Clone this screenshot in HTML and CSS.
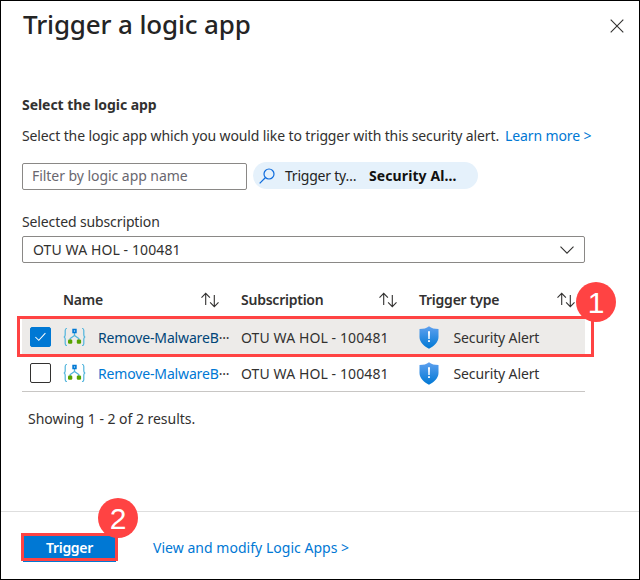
FILE: index.html
```html
<!DOCTYPE html>
<html lang="en">
<head>
<meta charset="utf-8">
<title>Trigger a logic app</title>
<link rel="stylesheet" href="styles.css">
</head>
<body>
<svg class="defs" width="0" height="0">
  <defs>
    <linearGradient id="shieldFill" x1="0" y1="0" x2="0" y2="1"><stop offset="0" stop-color="#5ea0ef"/><stop offset="1" stop-color="#0078d4"/></linearGradient>
    <symbol id="sort" viewBox="0 0 20 16"><path d="M5.7 13V1.5M1.5 5.6 5.7 1.4 9.9 5.6M14.3 3V14.5M10.1 10.4 14.3 14.6 18.5 10.4" fill="none" stroke="#323130" stroke-width="1.1"/></symbol>
    <symbol id="logic" viewBox="0 0 24 20">
      <path d="M4 1.500H3.600Q2.200 1.500 2.200 3.500V7.500Q2.200 10 .7 10 2.200 10 2.200 12.500V16.500Q2.200 18.500 3.600 18.500H4M19 1.500H19.400Q20.800 1.500 20.800 3.500V7.500Q20.800 10 22.300 10 20.800 10 20.800 12.500V16.500Q20.800 18.500 19.400 18.500H19" fill="none" stroke="#50b4dc" stroke-width="1.2"/>
      <path d="M11.500 6V8.500L7.200 11.500V13M11.500 8.500 15.800 11.500V13" fill="none" stroke="#50b4dc" stroke-width="1.3"/>
      <path d="M10.100 2.600H12.900V5.400H10.100Z" fill="#fff" stroke="#0078d4" stroke-width="1.600"/>
      <rect x="5" y="12.500" width="4.300" height="4.200" rx="1.200" fill="#57a300"/><rect x="13.800" y="12.500" width="4.300" height="4.200" rx="1.200" fill="#57a300"/>
    </symbol>
    <symbol id="shield" viewBox="0 0 20 23"><path d="M10 .3C12.500 2.500 15.500 2.900 19.500 3V11C19.500 16.500 14.500 20.500 10 22.700 5.500 20.500.5 16.500.5 11V3C4.500 2.900 7.500 2.500 10 .3Z" fill="url(#shieldFill)"/><path d="M9 5.200H11L10.700 13H9.300Z" fill="#fff"/><rect x="9.100" y="14.200" width="1.800" height="1.800" fill="#fff"/></symbol>
  </defs>
</svg>
<main class="panel">
  <header class="top"><h1 class="title">Trigger a logic app</h1>
    <svg class="close" viewBox="0 0 14 14"><path d="M.7.7 13.300 13.300M13.300.7.7 13.300" stroke="#323130" stroke-width="1.1"/></svg></header>
  <section class="body">
    <h2 class="section">Select the logic app</h2>
    <p class="desc"><span>Select the logic app which you would like to trigger with this security alert.</span><a class="learn">Learn more &gt;</a></p>
    <div class="filters">
      <div class="filter">Filter by logic app name</div>
      <div class="pill"><svg class="search" viewBox="0 0 16 16"><circle cx="10" cy="6" r="5" fill="none" stroke="#0f6cdd" stroke-width="1.200"/><path d="M6.500 9.500.7 15.300" stroke="#0f6cdd" stroke-width="1.200"/></svg><span class="pill-key">Trigger ty…</span><span class="pill-value">Security Al…</span></div>
    </div>
    <div class="label">Selected subscription</div>
    <div class="select"><span class="sub">OTU WA HOL - 100481</span><svg class="chev" viewBox="0 0 14 8"><path d="M.5.6 7 7.100 13.500.6" fill="none" stroke="#323130" stroke-width="1.100"/></svg></div>
    <div class="row head">
      <div></div><div class="cell"><span>Name</span><svg class="sort"><use href="#sort"/></svg></div>
      <div class="cell"><span>Subscription</span><svg class="sort"><use href="#sort"/></svg></div>
      <div class="cell"><span>Trigger type</span><svg class="sort"><use href="#sort"/></svg></div>
    </div>
    <div class="row item selected">
      <div class="check on"><svg viewBox="0 0 21 21"><path d="M4.500 10.500 8.500 14.300 16.200 6" fill="none" stroke="#fff" stroke-width="1.200"/></svg></div>
      <div class="cell"><svg class="logic"><use href="#logic"/></svg><span class="name">Remove-MalwareB</span><span class="dots">···</span></div>
      <div class="cell"><span class="sub">OTU WA HOL - 100481</span></div>
      <div class="cell"><svg class="shield"><use href="#shield"/></svg><span class="alert">Security Alert</span></div>
      <div class="outline"><b class="badge one">1</b></div>
    </div>
    <div class="row item">
      <div class="check"></div>
      <div class="cell"><svg class="logic"><use href="#logic"/></svg><span class="name">Remove-MalwareB</span><span class="dots">···</span></div>
      <div class="cell"><span class="sub">OTU WA HOL - 100481</span></div>
      <div class="cell"><svg class="shield"><use href="#shield"/></svg><span class="alert">Security Alert</span></div>
    </div>
    <div class="count">Showing 1 - 2 of 2 results.</div>
  </section>
  <footer class="foot"><div class="button">Trigger<div class="button-outline"><b class="badge two">2</b></div></div><a class="view">View and modify Logic Apps &gt;</a></footer>
</main>
</body>
</html>
```
FILE: styles.css
```css
* { box-sizing: border-box; }
body { margin: 0; font: 14px/20px "Noto Sans", sans-serif; color: #323130; background: #fff; }
.defs { display: block; height: 0; }
.panel { width: 640px; height: 580px; border: 1px solid #000; display: flex; flex-direction: column; }
span, a { white-space: nowrap; }
a { color: #0078d4; }
h1, h2, p { margin: 0; }
svg { display: block; flex: none; }
.top { height: 94px; padding: 5px 15px 0 22px; display: flex; justify-content: space-between; align-items: flex-start; }
.title { font-size: 26px; line-height: 36px; font-weight: 500; color: #242424; letter-spacing: -0.15px; }
.close { width: 14px; height: 14px; margin-top: 13px; }
.body { width: 584px; padding-left: 21px; height: 416px; }
.section { font-size: 14px; line-height: 20px; font-weight: 700; height: 31px; letter-spacing: -0.05px; }
.desc { height: 36px; display: flex; gap: 6px; letter-spacing: -0.12px; }
.filters { display: flex; gap: 6px; height: 50px; }
.filter { width: 225px; height: 27px; margin-top: 1px; border: 1px solid #8a8886; border-radius: 2px; padding: 2px 9px; color: #69676f; letter-spacing: -0.05px; }
.pill { width: 225px; height: 27px; border-radius: 14px; background: #e5f1fb; display: flex; align-items: center; padding-left: 6px; color: #242424; }
.search { width: 16px; height: 16px; margin-right: 10px; }
.pill-key { width: 84px; letter-spacing: -0.22px; }
.pill-value { font-weight: 700; color: #111; letter-spacing: 0.1px; }
.label { height: 24px; letter-spacing: -0.12px; }
.select { height: 27px; border: 1px solid #8a8886; border-radius: 2px; padding: 0 10px; display: flex; align-items: center; justify-content: space-between; }
.sub { letter-spacing: 0.1px; }
.chev { width: 14px; height: 8px; }
.row { display: grid; grid-template-columns: 41px 178px 178px 166px; align-items: center; position: relative; }
.cell { display: flex; align-items: center; }
.head { height: 56px; padding-top: 18px; font-weight: 600; letter-spacing: -0.24px; }
.head .sort { margin-left: auto; margin-right: 21px; width: 20px; height: 16px; }
.head .cell:last-child .sort { margin-right: 9px; }
.item { height: 36px; }
.item span { padding-top: 2px; }
.selected { background: #edebe9; }
.item:not(.selected) { height: 37px; border-bottom: 1px solid #c8c6c4; }
.check { width: 21px; height: 20px; margin-left: 8px; border: 1px solid #323130; border-radius: 2px; }
.on { background: #0078d4; border-color: #0078d4; }
.on svg { width: 19px; height: 18px; }
.logic { width: 24px; height: 20px; margin-right: 11px; }
.name { color: #0078d4; letter-spacing: -0.15px; }
.dots { letter-spacing: -0.2px; }
.selected .name { color: #004578; }
.shield { width: 20px; height: 23px; margin-right: 14.500px; }
.alert { letter-spacing: -0.12px; }
.outline { position: absolute; left: -5px; top: -3px; width: 577px; height: 41px; border: 3px solid #ff4343; }
.button-outline { position: absolute; left: -2px; top: -1px; width: 97px; height: 28px; border: 3px solid #ff4343; }
.badge { position: absolute; width: 40px; height: 40px; border-radius: 50%; background: #ff4343; color: #fff; font: 30px/41px "Liberation Sans", sans-serif; letter-spacing: 0; text-align: center; }
.one { left: 556px; top: -37px; }
.two { left: 74px; top: -38px; }
.count { padding: 17px 0 0 6px; letter-spacing: -0.03px; }
.foot { border-top: 1px solid #dedede; flex: 1; display: flex; padding: 22px 0 0 22px; }
.button { position: relative; width: 93px; height: 28px; background: #0078d4; color: #fff; font-weight: 600; text-align: center; line-height: 28px; letter-spacing: -0.3px; }
.view { margin-left: 37px; line-height: 28px; letter-spacing: 0.03px; }
```
